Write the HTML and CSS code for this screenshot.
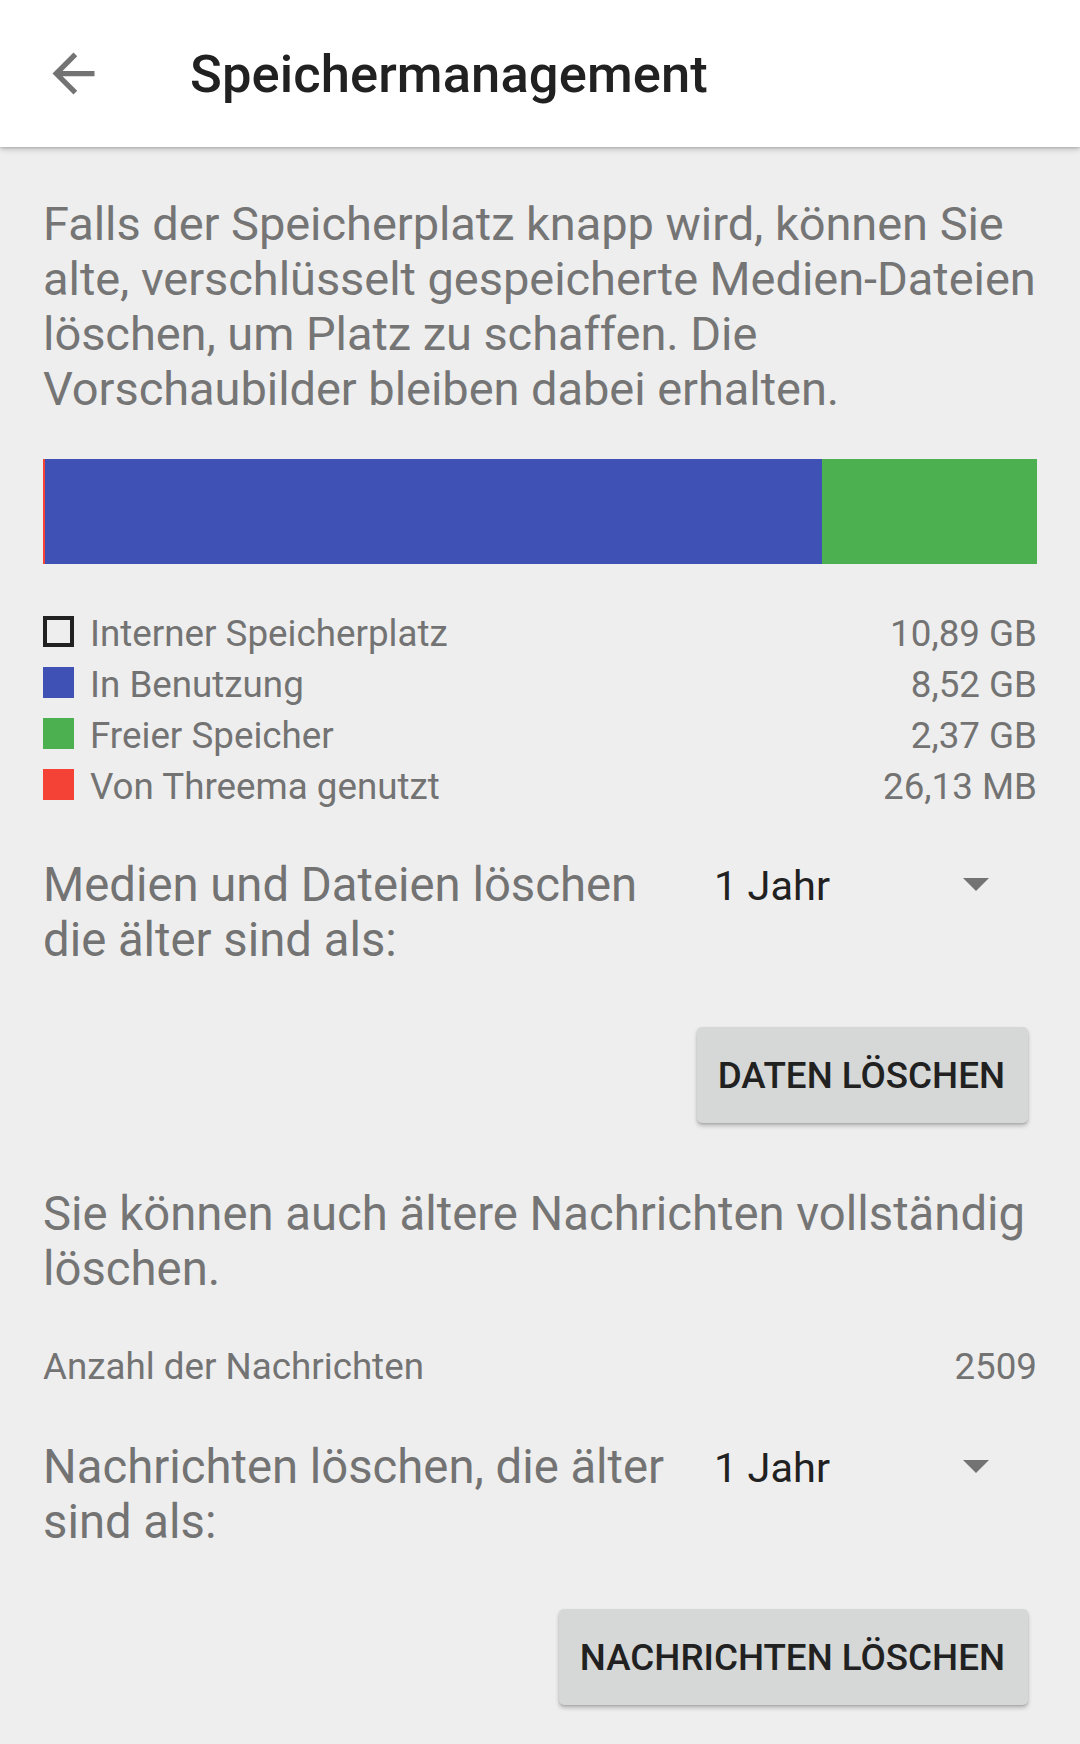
FILE: index.html
```html
<!DOCTYPE html>
<html lang="de">
<head>
<meta charset="utf-8">
<title>Speichermanagement</title>
<link rel="stylesheet" href="styles.css">
</head>
<body>
<header class="toolbar">
  <span class="back">
    <svg viewBox="0 0 24 24" width="63" height="63"><path fill="#737373" d="M20 11H7.83l5.59-5.59L12 4l-8 8 8 8 1.41-1.41L7.83 13H20v-2z"/></svg>
  </span>
  <h1 class="title">Speichermanagement</h1>
</header>
<main class="content">
  <p class="intro intro-1">Falls der Speicherplatz knapp wird, können Sie alte, verschlüsselt gespeicherte Medien-Dateien löschen, um Platz zu schaffen. Die Vorschaubilder bleiben dabei erhalten.</p>

  <div class="bar">
    <span class="seg seg-red" style="flex-basis:2px"></span>
    <span class="seg seg-blue" style="flex-basis:777px"></span>
    <span class="seg seg-green" style="flex-grow:1"></span>
  </div>

  <ul class="legend">
    <li class="legend-row"><span class="swatch swatch-total"></span><span class="legend-label">Interner Speicherplatz</span><span class="legend-value">10,89 GB</span></li>
    <li class="legend-row"><span class="swatch swatch-blue"></span><span class="legend-label">In Benutzung</span><span class="legend-value">8,52 GB</span></li>
    <li class="legend-row"><span class="swatch swatch-green"></span><span class="legend-label">Freier Speicher</span><span class="legend-value">2,37 GB</span></li>
    <li class="legend-row"><span class="swatch swatch-red"></span><span class="legend-label">Von Threema genutzt</span><span class="legend-value">26,13 MB</span></li>
  </ul>

  <div class="select-row select-media">
    <div class="select-label">Medien und Dateien löschen die älter sind als:</div>
    <div class="spinner"><span class="spinner-text">1 Jahr</span><span class="caret"></span></div>
  </div>
  <div class="actions actions-media">
    <button class="btn">DATEN LÖSCHEN</button>
  </div>

  <p class="intro intro-2">Sie können auch ältere Nachrichten vollständig löschen.</p>

  <div class="count-row">
    <span class="count-label">Anzahl der Nachrichten</span>
    <span class="count-value">2509</span>
  </div>

  <div class="select-row select-msgs">
    <div class="select-label">Nachrichten löschen, die älter sind als:</div>
    <div class="spinner"><span class="spinner-text">1 Jahr</span><span class="caret"></span></div>
  </div>
  <div class="actions actions-msgs">
    <button class="btn">NACHRICHTEN LÖSCHEN</button>
  </div>
</main>
</body>
</html>
```

FILE: styles.css
```css
* { box-sizing: border-box; }
html, body {
  margin: 0;
  padding: 0;
  background: #eeeeee;
  font-family: Roboto, "Noto Sans", "Liberation Sans", sans-serif;
}
body { width: 1080px; min-height: 1744px; }

.toolbar {
  height: 147px;
  background: #ffffff;
  display: flex;
  align-items: center;
  box-shadow: 0 2px 6px rgba(0,0,0,0.22), 0 1px 2px rgba(0,0,0,0.12);
  position: relative;
  z-index: 1;
}
.back {
  width: 63px;
  height: 63px;
  margin-left: 42px;
  display: flex;
}
.title {
  margin: 0 0 0 85px;
  font-size: 52.5px;
  font-weight: 500;
  color: #212121;
  letter-spacing: 0.1px;
}

.content {
  padding: 49px 43px 0 43px;
}

.intro {
  margin: 0;
  font-size: 47.25px;
  line-height: 55px;
  color: #757575;
}
.intro-1 {
  font-size: 47px;
  letter-spacing: -0.05px;
  margin-right: -8px;
}

.bar {
  margin-top: 43px;
  height: 105px;
  display: flex;
}
.seg { display: block; height: 100%; flex-shrink: 0; }
.seg-red { background: #f44336; }
.seg-blue { background: #3f51b5; }
.seg-green { background: #4caf50; }

.legend {
  list-style: none;
  margin: 44px 0 0 0;
  padding: 0;
}
.legend-row {
  display: flex;
  align-items: center;
  height: 51px;
  font-size: 36.75px;
  color: #737373;
}
.swatch {
  width: 31px;
  height: 31px;
  margin-right: 16px;
  flex-shrink: 0;
  position: relative;
  top: -2px;
}
.swatch-total { border: 4px solid #212121; background: transparent; }
.swatch-blue { background: #3f51b5; }
.swatch-green { background: #4caf50; }
.swatch-red { background: #f44336; }
.legend-label { flex: 1; }
.legend-value { text-align: right; }

.select-row {
  display: grid;
  grid-template-columns: 640px 1fr;
  column-gap: 31px;
}
.select-media { margin-top: 46px; }
.select-label {
  font-size: 47.25px;
  line-height: 55px;
  color: #737373;
}
.spinner {
  display: flex;
  align-items: flex-start;
  justify-content: space-between;
  padding-right: 48px;
}
.spinner-text {
  font-size: 41.5px;
  line-height: 55px;
  color: #212121;
}
.caret {
  width: 0;
  height: 0;
  margin-top: 20px;
  border-left: 13px solid transparent;
  border-right: 13px solid transparent;
  border-top: 13px solid #737373;
}

.actions {
  display: flex;
  justify-content: flex-end;
  padding-right: 9px;
}
.actions-media { margin-top: 59px; }
.actions-msgs { margin-top: 59px; }
.btn {
  height: 96px;
  padding: 0 23px 0 21px;
  border: none;
  border-radius: 5px;
  background: #d6d7d7;
  color: #212121;
  font-family: Roboto, "Noto Sans", "Liberation Sans", sans-serif;
  font-size: 36.75px;
  font-weight: 500;
  letter-spacing: 0;
  box-shadow: 0 3px 4px rgba(0,0,0,0.22), 0 1px 2px rgba(0,0,0,0.12);
}

.intro-2 { margin-top: 64px; }

.count-row {
  display: flex;
  justify-content: space-between;
  margin-top: 44px;
  height: 51px;
  align-items: center;
  font-size: 36.75px;
  color: #737373;
}

.select-msgs { margin-top: 48px; }
```
